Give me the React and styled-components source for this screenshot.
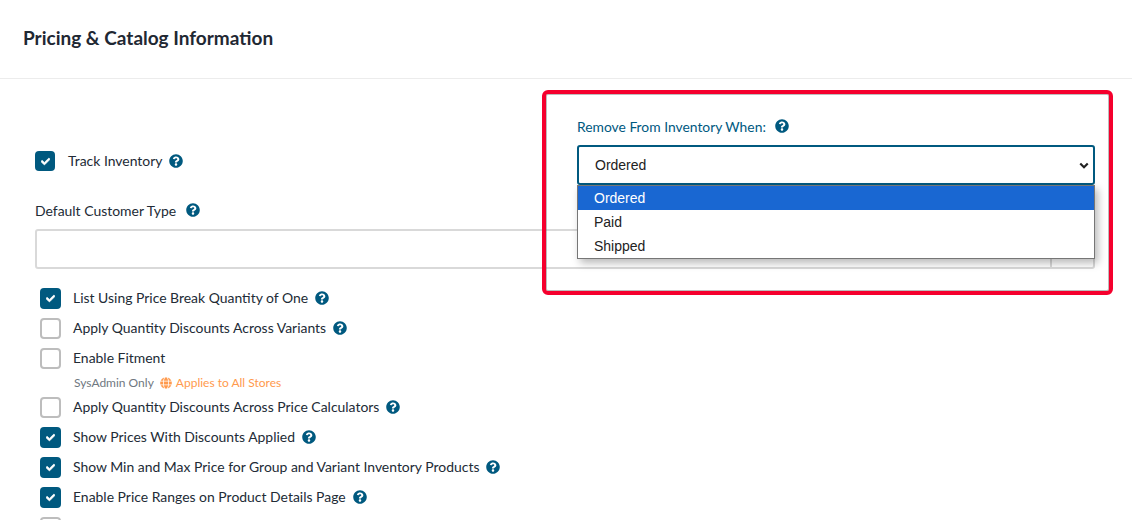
import React from 'react'
import styled, { createGlobalStyle } from 'styled-components'
import { FaCheck, FaGlobe, FaQuestionCircle } from 'react-icons/fa'

const GlobalStyle = createGlobalStyle`
    html, body {
        margin: 0;
        padding: 0;
        height: 520px;
        overflow: hidden;
        background: #fff;
        font-family: "Lato", "Open Sans", sans-serif;
        color: #222b36;
    }
    * {
        box-sizing: border-box;
    }
`

const settings = [
    { label: 'List Using Price Break Quantity of One', checked: true, help: true },
    { label: 'Apply Quantity Discounts Across Variants', checked: false, help: true },
    { label: 'Enable Fitment', checked: false, sysAdmin: true },
    { label: 'Apply Quantity Discounts Across Price Calculators', checked: false, help: true },
    { label: 'Show Prices With Discounts Applied', checked: true, help: true },
    { label: 'Show Min and Max Price for Group and Variant Inventory Products', checked: true, help: true },
    { label: 'Enable Price Ranges on Product Details Page', checked: true, help: true },
    { label: 'Enable Price Ranges on Category and Search Page', checked: false, help: true },
]

const Help = ({ gap }) => (
    <HelpIcon $gap={gap}>
        <FaQuestionCircle size={14} />
    </HelpIcon>
)

const Check = ({ checked, size }) => (
    <CheckBox $checked={checked} $size={size}>
        {checked && <FaCheck size={9} />}
    </CheckBox>
)

export default function App() {
    return (
        <Page>
            <GlobalStyle />
            <Header>
                <h1>Pricing &amp; Catalog Information</h1>
            </Header>
            <Body>
                <TopRow>
                    <TrackRow>
                        <Check checked size={20} />
                        <TrackLabel>Track Inventory</TrackLabel>
                        <Help gap={7} />
                    </TrackRow>
                    <RemoveField>
                        <RemoveLabel>
                            Remove From Inventory When:
                            <Help gap={9} />
                        </RemoveLabel>
                        <SelectBox>
                            <span>Ordered</span>
                            <Chevron viewBox="0 0 12 8">
                                <path d="M1.5 1.5 6 6l4.5-4.5" />
                            </Chevron>
                            <Options>
                                <Option $active>Ordered</Option>
                                <Option>Paid</Option>
                                <Option>Shipped</Option>
                            </Options>
                        </SelectBox>
                    </RemoveField>
                </TopRow>
                <CustomerField>
                    <FieldLabel>
                        Default Customer Type
                        <Help gap={10} />
                    </FieldLabel>
                    <CustomerInput>
                        <InputAddon />
                    </CustomerInput>
                </CustomerField>
                <SettingsList>
                    {settings.map((setting) => (
                        <li key={setting.label}>
                            <SettingRow>
                                <Check checked={setting.checked} size={21} />
                                <SettingLabel>{setting.label}</SettingLabel>
                                {setting.help && <Help gap={7} />}
                            </SettingRow>
                            {setting.sysAdmin && (
                                <AdminNote>
                                    <span>SysAdmin Only</span>
                                    <StoresNote>
                                        <FaGlobe size={12} />
                                        Applies to All Stores
                                    </StoresNote>
                                </AdminNote>
                            )}
                        </li>
                    ))}
                </SettingsList>
            </Body>
            <Highlight />
        </Page>
    )
}

const Page = styled.div`
    position: relative;
    width: 1132px;
    height: 520px;
    overflow: hidden;
`
const Header = styled.header`
    height: 79px;
    padding: 27px 23px 0;
    border-bottom: 1px solid #ececec;
    h1 {
        margin: 0;
        font-size: 19px;
        line-height: 22px;
        font-weight: 700;
        color: #1f2833;
    }
`
const Body = styled.div`
    padding: 0 37px 0 35px;
`
const TopRow = styled.div`
    display: flex;
    justify-content: space-between;
    align-items: flex-end;
    height: 106px;
`
const TrackRow = styled.div`
    display: flex;
    align-items: center;
    height: 20px;
    margin-bottom: 14px;
`
const TrackLabel = styled.span`
    margin: 0 0 2px 13px;
    font-size: 13.95px;
`
const RemoveField = styled.div`
    width: 518px;
`
const RemoveLabel = styled.div`
    display: flex;
    align-items: center;
    height: 20px;
    margin-bottom: 9px;
    font-size: 13.85px;
    color: #00597f;
`
const SelectBox = styled.div`
    position: relative;
    display: flex;
    align-items: center;
    justify-content: space-between;
    height: 40px;
    padding: 0 4px 0 16px;
    border: 2px solid #00597f;
    border-radius: 3px;
    font-family: "Liberation Sans", Arial, sans-serif;
    font-size: 14px;
    color: #222;
    background: #fff;
`
const Chevron = styled.svg`
    width: 10px;
    height: 7px;
    fill: none;
    stroke: #222;
    stroke-width: 2.6;
`
const Options = styled.div`
    position: absolute;
    z-index: 2;
    top: 38px;
    left: -2px;
    right: -2px;
    height: 74px;
    border: 1px solid #767676;
    background: #fff;
    box-shadow: 3px 4px 8px rgba(0, 0, 0, 0.28);
`
const Option = styled.div`
    height: 24px;
    padding-left: 16px;
    line-height: 24px;
    color: ${({ $active }) => ($active ? '#fff' : '#222')};
    background: ${({ $active }) => ($active ? '#1967d2' : '#fff')};
`
const CustomerField = styled.div`
    margin-top: 15px;
`
const FieldLabel = styled.div`
    display: flex;
    align-items: center;
    height: 20px;
    font-size: 13.95px;
`
const CustomerInput = styled.div`
    display: flex;
    justify-content: flex-end;
    height: 40px;
    margin-top: 9px;
    border: 2px solid #d9d9d9;
    border-radius: 3px;
`
const InputAddon = styled.div`
    width: 43px;
    border-left: 2px solid #d9d9d9;
`
const SettingsList = styled.ul`
    list-style: none;
    margin: 19px 0 0;
    padding: 0 0 0 5px;
    li {
        margin-bottom: 9px;
    }
`
const SettingRow = styled.div`
    display: flex;
    align-items: center;
    height: 21px;
    > span:not(:first-child) {
        margin-bottom: 2px;
    }
`
const SettingLabel = styled.span`
    margin-left: 12px;
    font-size: 13.95px;
`
const AdminNote = styled.div`
    display: flex;
    align-items: center;
    height: 15px;
    margin: 6px 0 -2px 34px;
    font-size: 12px;
    color: #6f7780;
`
const StoresNote = styled.span`
    display: inline-flex;
    align-items: center;
    gap: 4px;
    margin-left: 6px;
    color: #ff9a4d;
`
const CheckBox = styled.span`
    display: inline-flex;
    align-items: center;
    justify-content: center;
    flex: none;
    width: ${({ $size }) => $size}px;
    height: ${({ $size }) => $size}px;
    border-radius: 4px;
    border: ${({ $checked }) => ($checked ? 'none' : '2px solid #bdbdbd')};
    background: ${({ $checked }) => ($checked ? '#00597f' : '#fff')};
    color: #fff;
    svg {
        stroke: currentColor;
        stroke-width: 40px;
    }
`
const HelpIcon = styled.span`
    display: inline-flex;
    margin-left: ${({ $gap }) => $gap}px;
    color: #00597f;
`
const Highlight = styled.div`
    position: absolute;
    z-index: 3;
    left: 542px;
    top: 90px;
    width: 571px;
    height: 205px;
    border: 4px solid #f5002d;
    border-radius: 6px;
    box-shadow: inset 0 0 0 1px rgba(90, 90, 90, 0.4);
    pointer-events: none;
`
